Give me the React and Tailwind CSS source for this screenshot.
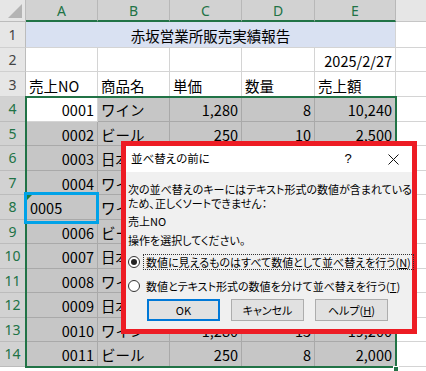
const rows = [
  ["4", "0001", "ワイン", "1,280", "8", "10,240"],
  ["5", "0002", "ビール", "250", "10", "2,500"],
  ["6", "0003", "日本酒", "2,500", "5", "12,500"],
  ["7", "0004", "ワイン", "1,280", "12", "15,360"],
  ["8", "0005", "ワイン", "1,280", "6", "7,680"],
  ["9", "0006", "ビール", "250", "20", "5,000"],
  ["10", "0007", "日本酒", "2,500", "3", "7,500"],
  ["11", "0008", "ワイン", "1,280", "10", "12,800"],
  ["12", "0009", "日本酒", "2,500", "4", "10,000"],
  ["13", "0010", "ワイン", "1,280", "15", "19,200"],
  ["14", "0011", "ビール", "250", "8", "2,000"],
];

const cols = ["A", "B", "C", "D", "E"];
const widths = ["w-[72px]", "w-[72px]", "w-[72px]", "w-[73px]", "w-[81px]"];

const sheetFont = "font-['Noto_Sans_CJK_JP','Noto_Sans',sans-serif]";
const headFont = "font-['Noto_Sans','Liberation_Sans',sans-serif]";

function RowHead({ n, selected }) {
  return (
    <div
      className={
        selected
          ? `w-[26px] shrink-0 flex items-center justify-center bg-[#d2d2d2] text-[#217346] border-r border-r-[#217346] border-b border-b-[#bcbcbc] text-[14px] ${headFont}`
          : `w-[26px] shrink-0 flex items-center justify-center bg-[#e6e6e6] text-[#444] border-r border-r-[#bcbcbc] border-b border-b-[#d0d0d0] text-[14px] ${headFont}`
      }
    >
      {n}
    </div>
  );
}

function Cell({ w, children, right, gray, white }) {
  return (
    <div
      className={`${w} shrink-0 flex items-end pb-[3px] px-[3px] border-r border-b leading-none overflow-hidden whitespace-nowrap ${
        right ? "justify-end" : "justify-start"
      } ${gray && !white ? "bg-[#c6c6c6] border-[#a9a9a9]" : "bg-white border-[#d4d4d4]"}`}
    >
      {children}
    </div>
  );
}

function Spreadsheet() {
  return (
    <div className={`relative w-[426px] h-[371px] overflow-hidden bg-white text-black ${sheetFont} text-[14.5px]`}>
      {/* column headers */}
      <div className="flex h-[22px]">
        <div className="w-[26px] shrink-0 bg-[#e6e6e6] border-r border-b border-[#bcbcbc] relative">
          <svg width="26" height="22" className="absolute inset-0">
            <polygon points="22,4 22,18 8,18" fill="#b4b4b4" />
          </svg>
        </div>
        {cols.map((c, i) => (
          <div
            key={c}
            className={`${widths[i]} shrink-0 flex items-center justify-center bg-[#d2d2d2] text-[#217346] border-r border-r-[#b8b8b8] border-b-2 border-b-[#217346] text-[14px] ${headFont}`}
          >
            {c}
          </div>
        ))}
        <div className="flex-1 bg-[#e6e6e6] border-b border-[#c6c6c6]" />
      </div>

      {/* row 1 */}
      <div className="flex h-[26px]">
        <RowHead n="1" />
        <div className="w-[370px] shrink-0 flex items-end justify-center pb-[4px] bg-[#d9e1f2] border-r border-b border-[#d4d4d4] leading-none">
          赤坂営業所販売実績報告
        </div>
        <div className="flex-1 border-b border-[#d4d4d4]" />
      </div>

      {/* row 2 */}
      <div className="flex h-[24px]">
        <RowHead n="2" />
        {cols.map((c, i) => (
          <Cell key={c} w={widths[i]} right>
            {c === "E" ? "2025/2/27" : ""}
          </Cell>
        ))}
        <div className="flex-1 border-b border-[#d4d4d4]" />
      </div>

      {/* row 3 */}
      <div className="flex h-[25px]">
        <RowHead n="3" />
        {["売上NO", "商品名", "単価", "数量", "売上額"].map((t, i) => (
          <Cell key={t} w={widths[i]}>
            {t}
          </Cell>
        ))}
        <div className="flex-1 border-b border-[#d4d4d4]" />
      </div>

      {/* data rows */}
      {rows.map((r) => (
        <div key={r[0]} className="flex h-[24.5px]">
          <RowHead n={r[0]} selected />
          <Cell w={widths[0]} right={r[0] !== "8"} gray white={r[0] === "4"}>
            {r[0] === "8" ? (
              <span className="relative pl-[1px]">
                <span className="absolute left-[-2px] top-[-6px] w-0 h-0 border-t-[5px] border-t-[#1e7b3a] border-r-[5px] border-r-transparent" />
                {r[1]}
              </span>
            ) : (
              r[1]
            )}
          </Cell>
          <Cell w={widths[1]} gray>
            {r[2]}
          </Cell>
          <Cell w={widths[2]} right gray>
            {r[3]}
          </Cell>
          <Cell w={widths[3]} right gray>
            {r[4]}
          </Cell>
          <Cell w={widths[4]} right gray>
            {r[5]}
          </Cell>
          <div className="flex-1 border-b border-[#d4d4d4]" />
        </div>
      ))}

      {/* selection outline */}
      <div className="absolute left-[25px] top-[96px] w-[372px] h-[272px] border-2 border-[#217346] pointer-events-none" />
      <div className="absolute left-[393px] top-[366px] w-[6px] h-[6px] bg-[#217346] border border-white" />

      {/* annotation on A8 */}
      <div className="absolute left-[24px] top-[192px] w-[75px] h-[32px] border-[3px] border-[#00a2e8] pointer-events-none" />

      <SortDialog />
    </div>
  );
}

function Radio({ checked }) {
  return (
    <span className="w-[12px] h-[12px] shrink-0 rounded-full border border-[#333] bg-white flex items-center justify-center">
      {checked && <span className="w-[6px] h-[6px] rounded-full bg-[#222]" />}
    </span>
  );
}

function SortDialog() {
  return (
    <div className="absolute left-[121px] top-[141px] w-[296px] h-[193px] border-[5px] border-[#ed1c24] bg-[#f0f0f0] flex flex-col text-[11px] text-black font-['Noto_Sans_CJK_JP',sans-serif] [font-feature-settings:'palt']">
      <div className="h-[26px] shrink-0 bg-white flex items-center pl-[5px] text-[11.5px]">
        <span className="flex-1">並べ替えの前に</span>
        <span className="w-[20px] text-center text-[13px] mr-[30px] font-['Liberation_Sans',sans-serif]">?</span>
        <svg width="11" height="11" viewBox="0 0 11 11" className="mr-[13px]">
          <path d="M0.5 0.5L10.5 10.5M10.5 0.5L0.5 10.5" stroke="#111" strokeWidth="1" />
        </svg>
      </div>
      <div className="flex-1 pl-[2px] pt-[10px]">
        <p className="leading-[14px] whitespace-nowrap">
          次の並べ替えのキーにはテキスト形式の数値が含まれている
          <br />
          ため、正しくソートできません：
        </p>
        <p className="leading-[14px] mt-[4px]">売上NO</p>
        <p className="leading-[14px] mt-[5px]">操作を選択してください。</p>
        <div className="flex items-center h-[16px] mt-[7px]">
          <Radio checked />
          <span className="ml-[3px] px-[2px] h-[16px] flex items-center border border-dotted border-[#333] whitespace-nowrap">
            数値に見えるものはすべて数値として並べ替えを行う(<u>N</u>)
          </span>
        </div>
        <div className="flex items-center h-[16px] mt-[8px]">
          <Radio />
          <span className="ml-[6px] whitespace-nowrap">
            数値とテキスト形式の数値を分けて並べ替えを行う(<u>T</u>)
          </span>
        </div>
        <div className="flex gap-[11px] ml-[19px] mt-[5px]">
          <button className="w-[73px] h-[22px] bg-[#e1e1e1] border-2 border-[#0078d7] flex items-center justify-center">
            OK
          </button>
          <button className="w-[73px] h-[22px] bg-[#e1e1e1] border border-[#adadad] flex items-center justify-center">
            キャンセル
          </button>
          <button className="w-[73px] h-[22px] bg-[#e1e1e1] border border-[#adadad] flex items-center justify-center">
            ヘルプ(<u>H</u>)
          </button>
        </div>
      </div>
    </div>
  );
}

export default function App() {
  return <Spreadsheet />;
}
